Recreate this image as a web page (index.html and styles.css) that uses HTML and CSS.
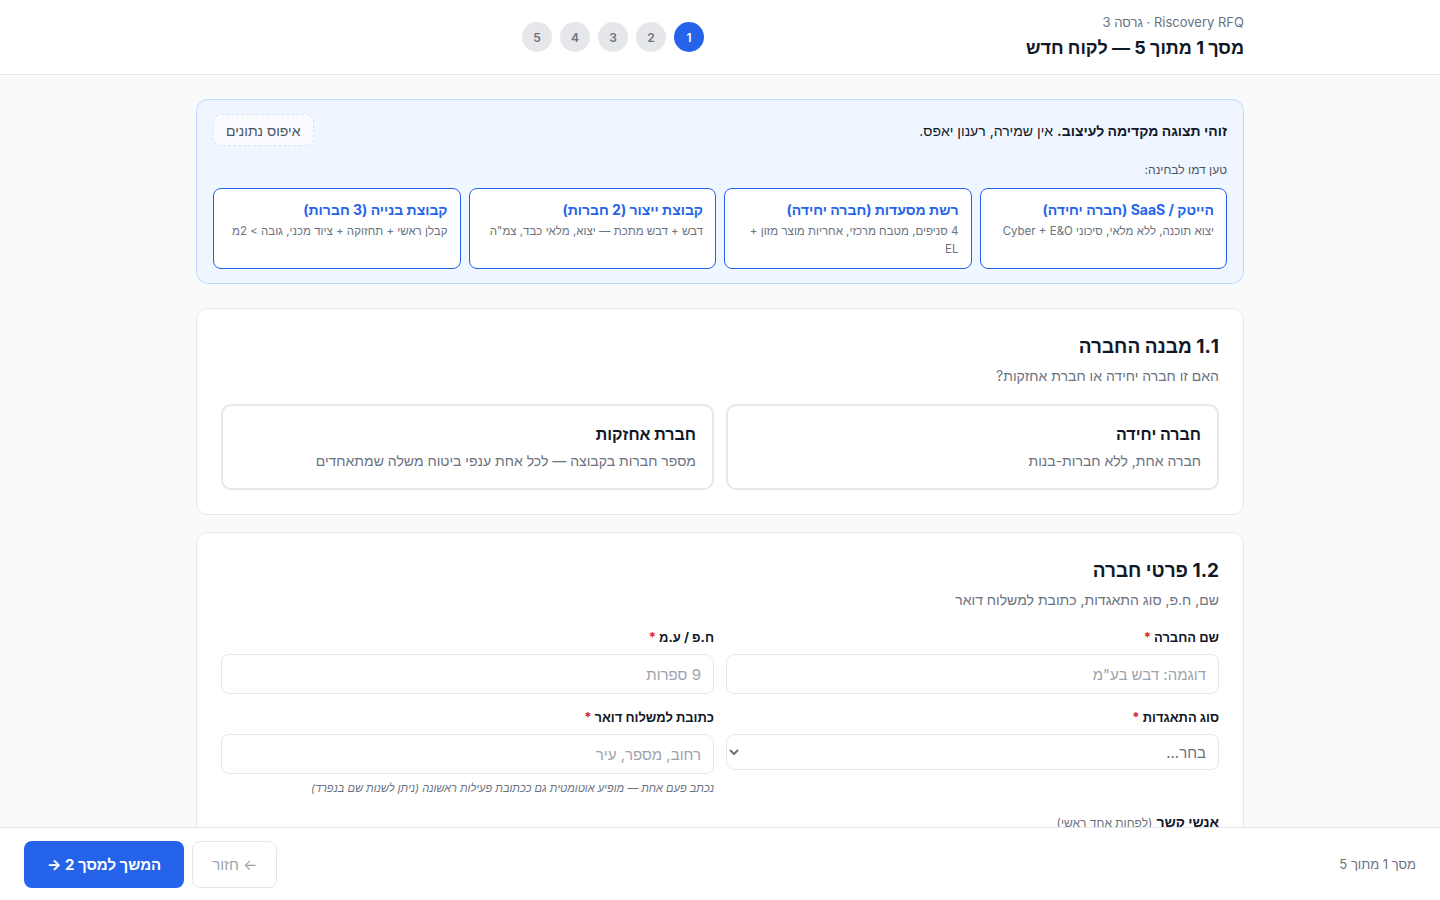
FILE: index.html
```html
<!DOCTYPE html>
<html lang="he" dir="rtl">
<head>
    <meta charset="UTF-8">
    <meta name="viewport" content="width=device-width, initial-scale=1.0">
    <title>Riscovery RFQ — לקוח חדש</title>
    <link rel="stylesheet" href="styles.css">
</head>
<body>
    <header class="top-bar">
        <div class="top-inner">
            <div class="title-block">
                <div class="app-name">Riscovery RFQ · גרסה 3</div>
                <h1>מסך 1 מתוך 5 — לקוח חדש</h1>
            </div>
            <div class="steps">
                <span class="step active">1</span>
                <span class="step">2</span>
                <span class="step">3</span>
                <span class="step">4</span>
                <span class="step">5</span>
            </div>
        </div>
    </header>

    <main class="main">
        <!-- Demo banner -->
        <section class="demo-banner">
            <div class="demo-row">
                <p><strong>זוהי תצוגה מקדימה לעיצוב.</strong> אין שמירה, רענון יאפס.</p>
                <button class="reset-button">איפוס נתונים</button>
            </div>
            <div class="demo-label">טען דמו לבחינה:</div>
            <div class="demo-grid">
                <button class="demo-card">
                    <span class="demo-title">הייטק / SaaS (חברה יחידה)</span>
                    <span class="demo-desc">יצוא תוכנה, ללא מלאי, סיכוני Cyber + E&amp;O</span>
                </button>
                <button class="demo-card">
                    <span class="demo-title">רשת מסעדות (חברה יחידה)</span>
                    <span class="demo-desc">4 סניפים, מטבח מרכזי, אחריות מוצר מזון + EL</span>
                </button>
                <button class="demo-card">
                    <span class="demo-title">קבוצת ייצור (2 חברות)</span>
                    <span class="demo-desc">דבש + דבש מתכת — יצוא, מלאי כבד, צמ"ה</span>
                </button>
                <button class="demo-card">
                    <span class="demo-title">קבוצת בנייה (3 חברות)</span>
                    <span class="demo-desc">קבלן ראשי + תחזוקה + ציוד מכני, גובה &gt; 2מ</span>
                </button>
            </div>
        </section>

        <!-- 1.1 -->
        <section class="card">
            <h2>1.1 מבנה החברה</h2>
            <p class="card-sub">האם זו חברה יחידה או חברת אחזקות?</p>
            <div class="two-col">
                <button class="option">
                    <span class="option-title">חברה יחידה</span>
                    <span class="option-desc">חברה אחת, ללא חברות-בנות</span>
                </button>
                <button class="option">
                    <span class="option-title">חברת אחזקות</span>
                    <span class="option-desc">מספר חברות בקבוצה — לכל אחת ענפי ביטוח משלה שמתאחדים</span>
                </button>
            </div>
        </section>

        <!-- 1.2 -->
        <section class="card">
            <h2>1.2 פרטי חברה</h2>
            <p class="card-sub">שם, ח.פ, סוג התאגדות, כתובת למשלוח דואר</p>
            <div class="two-col fields">
                <div class="field">
                    <label>שם החברה <span class="req">*</span></label>
                    <input type="text" class="input" placeholder='דוגמה: דבש בע"מ'>
                </div>
                <div class="field">
                    <label>ח.פ / ע.מ <span class="req">*</span></label>
                    <input type="text" class="input" placeholder="9 ספרות">
                </div>
                <div class="field">
                    <label>סוג התאגדות <span class="req">*</span></label>
                    <select class="input select">
                        <option>בחר...</option>
                        <option>חברה בע"מ</option>
                        <option>שותפות</option>
                        <option>עוסק מורשה</option>
                    </select>
                </div>
                <div class="field">
                    <label>כתובת למשלוח דואר <span class="req">*</span></label>
                    <input type="text" class="input" placeholder="רחוב, מספר, עיר">
                    <div class="hint">נכתב פעם אחת — מופיע אוטומטית גם ככתובת פעילות ראשונה (ניתן לשנות שם בנפרד)</div>
                </div>
            </div>

            <div class="contacts-head"><strong>אנשי קשר</strong> <span>(לפחות אחד ראשי)</span></div>
            <div class="two-col fields">
                <div class="field">
                    <label>שם מלא <span class="req">*</span></label>
                    <input type="text" class="input" placeholder="שם פרטי ומשפחה">
                </div>
                <div class="field">
                    <label>טלפון <span class="req">*</span></label>
                    <input type="text" class="input" placeholder="050-0000000">
                </div>
            </div>
        </section>
    </main>

    <footer class="bottom-bar">
        <span class="progress-text">מסך 1 מתוך 5</span>
        <div class="nav-buttons">
            <button class="back-button" disabled>← חזור</button>
            <button class="next-button">המשך למסך 2 →</button>
        </div>
    </footer>
</body>
</html>
```

FILE: styles.css
```css
* {
    box-sizing: border-box;
}

body {
    margin: 0;
    background-color: #f9fafb;
    color: #111827;
    font-family: Inter, "Liberation Sans", sans-serif;
    font-size: 14px;
}

button, input, select {
    font-family: inherit;
}

/* Top Bar */
.top-bar {
    background: white;
    border-bottom: 1px solid #e5e7eb;
    height: 75px;
}

.top-inner {
    max-width: 1048px;
    margin: 0 auto;
    height: 100%;
    display: flex;
    align-items: center;
}

.app-name {
    font-size: 13px;
    color: #6b7280;
    margin-bottom: 7px;
    margin-top: -2px;
}

.top-bar h1 {
    margin: 0;
    font-size: 18px;
    font-weight: 700;
}

.steps {
    flex: 1;
    display: flex;
    justify-content: center;
    gap: 8px;
    padding-left: 4px;
}

.step {
    width: 30px;
    height: 30px;
    border-radius: 50%;
    background: #e5e7eb;
    color: #6b7280;
    font-size: 12px;
    font-weight: 600;
    display: flex;
    align-items: center;
    justify-content: center;
}

.step.active {
    background: #2563eb;
    color: white;
}

/* Main */
.main {
    max-width: 1048px;
    margin: 0 auto;
    padding: 24px 0 120px;
    display: flex;
    flex-direction: column;
    gap: 17px;
}

/* Demo banner */
.demo-banner {
    background: #eff6ff;
    border: 1px solid #bfdbfe;
    border-radius: 12px;
    padding: 14px 16px;
    margin-bottom: 7px;
}

.demo-row {
    display: flex;
    align-items: center;
    justify-content: space-between;
}

.demo-row p {
    margin: 0;
    font-size: 14px;
    color: #111827;
}

.reset-button {
    height: 32px;
    padding: 0 12px;
    background: rgba(255, 255, 255, 0.6);
    border: 1px dashed #dbe3ee;
    border-radius: 8px;
    color: #4b5563;
    font-size: 14px;
}

.demo-label {
    font-size: 12px;
    color: #4b5563;
    margin: 16px 0 11px;
}

.demo-grid {
    display: grid;
    grid-template-columns: repeat(4, 1fr);
    gap: 8px;
}

.demo-card {
    background: white;
    border: 1px solid #2563eb;
    border-radius: 8px;
    padding: 12px 12px 10px;
    text-align: right;
    display: flex;
    flex-direction: column;
    gap: 3px;
}

.demo-title {
    color: #2563eb;
    font-weight: 700;
    font-size: 14px;
    line-height: 18px;
}

.demo-desc {
    color: #6b7280;
    font-size: 11.5px;
    line-height: 18px;
}

/* Cards */
.card {
    background: white;
    border: 1px solid #e5e7eb;
    border-radius: 12px;
    padding: 25px 24px 24px;
}

.card h2 {
    margin: 0;
    font-size: 19px;
    font-weight: 700;
    line-height: 26px;
}

.card-sub {
    margin: 6px 0 18px;
    font-size: 14px;
    color: #6b7280;
    line-height: 20px;
}

.two-col {
    display: grid;
    grid-template-columns: 1fr 1fr;
    gap: 12px;
}

.option {
    background: white;
    border: 2px solid #e5e7eb;
    border-radius: 10px;
    padding: 17px 16px 17px;
    text-align: right;
    display: flex;
    flex-direction: column;
    gap: 6px;
}

.option-title {
    font-size: 16px;
    font-weight: 700;
    line-height: 22px;
    color: #111827;
}

.option-desc {
    font-size: 14px;
    line-height: 20px;
    color: #6b7280;
}

/* Fields */
.fields {
    row-gap: 14px;
    margin-top: 1px;
}

.field label {
    display: block;
    font-size: 13px;
    font-weight: 700;
    line-height: 18px;
    margin-bottom: 8px;
}

.req {
    color: #dc2626;
}

.input {
    width: 100%;
    height: 40px;
    border: 1px solid #e5e7eb;
    border-radius: 8px;
    padding: 0 12px;
    font-size: 15px;
    color: #111827;
    background: white;
}

.input::placeholder {
    color: #9ca3af;
}

.select {
    height: 36px;
    color: #6b7280;
    padding: 0 8px;
}

.hint {
    margin-top: 7px;
    font-size: 11px;
    font-style: italic;
    color: #6b7280;
}

.contacts-head {
    margin: 18px 0 12px;
    font-size: 14px;
}

.contacts-head span {
    font-size: 12px;
    color: #6b7280;
}

/* Bottom Bar */
.bottom-bar {
    position: fixed;
    bottom: 0;
    left: 0;
    right: 0;
    height: 73px;
    background: white;
    border-top: 1px solid #e5e7eb;
    display: flex;
    align-items: center;
    justify-content: space-between;
    padding: 0 24px;
}

.progress-text {
    font-size: 13px;
    color: #6b7280;
}

.nav-buttons {
    display: flex;
    gap: 8px;
}

.back-button {
    height: 47px;
    padding: 0 19px;
    background: white;
    border: 1px solid #e5e7eb;
    border-radius: 8px;
    color: #9ca3af;
    font-size: 15px;
}

.next-button {
    height: 47px;
    padding: 0 23px;
    background: #2563eb;
    border: none;
    border-radius: 8px;
    color: white;
    font-size: 15px;
    font-weight: 700;
}
```
